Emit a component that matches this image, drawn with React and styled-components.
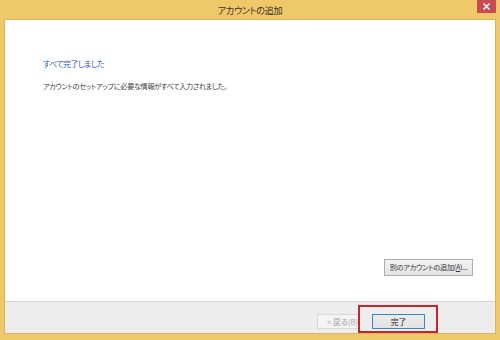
import React from "react";
import styled, { createGlobalStyle } from "styled-components";

const Global = createGlobalStyle`
  html, body { margin: 0; padding: 0; }
  body {
    font-family: "Noto Sans CJK JP", "Noto Sans", sans-serif;
    background: #efc86a;
  }
`;

export default function App() {
  return (
    <>
      <Global />
      <Window>
        <TitleBar>
          <span />
          <Title>アカウントの追加</Title>
          <Close aria-label="close">
            <svg width="7" height="7" viewBox="0 0 7 7">
              <path d="M1 1L6 6M6 1L1 6" stroke="#fff" strokeWidth="1.6" strokeLinecap="round" />
            </svg>
          </Close>
        </TitleBar>
        <Client>
          <Main>
            <Heading>すべて完了しました</Heading>
            <Body>アカウントのセットアップに必要な情報がすべて入力されました。</Body>
            <AddButton>別のアカウントの追加(<u>A</u>)...</AddButton>
          </Main>
          <Footer>
            <NavButton disabled>&lt; 戻る(B)</NavButton>
            <NavButton $primary>完了</NavButton>
          </Footer>
        </Client>
        <Highlight />
      </Window>
    </>
  );
}

const Window = styled.div`
position : relative;
width : 500px;
height : 340px;
display : flex;
flex-direction : column;
background : #efc86a;
overflow : hidden;
`
const TitleBar = styled.div`
height : 19px;
display : grid;
grid-template-columns : 1fr auto 1fr;
align-items : start;
`
const Title = styled.div`
font-size : 9.2px;
line-height : 20px;
color : #3b3324;
letter-spacing : -0.4px;
font-feature-settings : "palt";
`
const Close = styled.div`
justify-self : end;
width : 19px;
height : 13px;
margin-right : 4px;
background : #c94a4f;
display : flex;
align-items : center;
justify-content : center;
`
const Client = styled.div`
flex : 1;
margin : 0 4px 6px 4px;
border : 1px solid #d9b45c;
background : #fff;
display : flex;
flex-direction : column;
`
const Main = styled.div`
flex : 1;
display : flex;
flex-direction : column;
align-items : flex-start;
padding : 38px 22px 25px 38px;
`
const Heading = styled.div`
font-size : 8px;
line-height : 12px;
color : #2f55c4;
letter-spacing : -0.6px;
font-feature-settings : "palt";
`
const Body = styled.div`
margin-top : 10px;
font-size : 7.2px;
line-height : 12px;
color : #444;
letter-spacing : -0.4px;
font-feature-settings : "palt";
`
const AddButton = styled.div`
margin-top : auto;
align-self : flex-end;
width : 89px;
height : 17px;
box-sizing : border-box;
border : 1px solid #adadad;
background : linear-gradient(#f2f2f2, #e4e4e4);
font-size : 7.2px;
line-height : 15px;
color : #333;
text-align : center;
white-space : nowrap;
letter-spacing : -0.3px;
font-feature-settings : "palt";
u { text-underline-offset : 1px; }
`
const Footer = styled.div`
height : 32px;
box-sizing : border-box;
border-top : 1px solid #d4d4d4;
background : #ededed;
display : flex;
justify-content : flex-end;
align-items : flex-start;
gap : 12px;
padding : 12px 70px 0 0;
`
const NavButton = styled.div`
width : ${p => (p.$primary ? "53px" : "43px")};
height : 15px;
box-sizing : border-box;
border : 1px solid ${p => (p.$primary ? "#3c86c8" : "#d9d9d9")};
background : ${p => (p.$primary ? "linear-gradient(#ececec, #e2e2e2)" : "#f4f4f4")};
color : ${p => (p.disabled ? "#a3a3a3" : "#222")};
font-size : 7.8px;
line-height : 13px;
text-align : ${p => (p.$primary ? "center" : "left")};
padding-left : ${p => (p.$primary ? "0" : "9px")};
white-space : nowrap;
overflow : hidden;
font-feature-settings : "palt";
`
const Highlight = styled.div`
position : absolute;
left : 358px;
top : 305px;
width : 80px;
height : 28px;
box-sizing : border-box;
border : 2px solid #c1272d;
pointer-events : none;
`
